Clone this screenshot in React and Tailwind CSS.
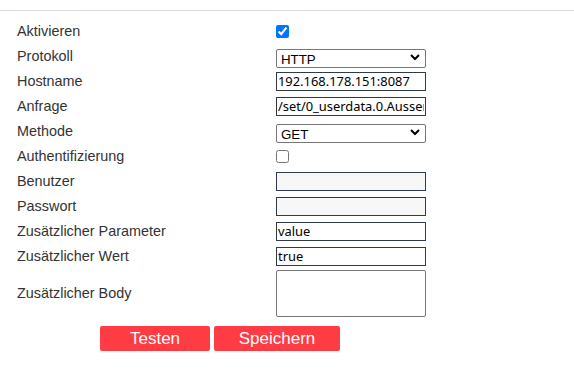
import { useState } from "react";

function Chevron() {
  return (
    <svg
      className="pointer-events-none absolute right-[6px] top-1/2 -translate-y-1/2"
      width="10"
      height="7"
      viewBox="0 0 10 7"
    >
      <path d="M1 1.5 L5 5.5 L9 1.5" fill="none" stroke="#000" strokeWidth="2" />
    </svg>
  );
}

function Select({ value, options }) {
  return (
    <div className="relative w-[150px] h-[19px]">
      <select
        defaultValue={value}
        className="appearance-none w-full h-full border border-[#767676] rounded-[2px] bg-white pl-[4px] text-[13.3px] text-black font-['Liberation_Sans',sans-serif] outline-none"
      >
        {options.map((o) => (
          <option key={o}>{o}</option>
        ))}
      </select>
      <Chevron />
    </div>
  );
}

function TextInput({ value, filled }) {
  return (
    <input
      type="text"
      defaultValue={value}
      className={`w-[150px] h-[19px] border border-[#2f3b48] px-[1px] text-[12.9px] text-black font-['Noto_Sans',sans-serif] outline-none ${
        filled ? "bg-white" : "bg-[#f7f7f7]"
      }`}
    />
  );
}

function Row({ label, children, tall }) {
  return (
    <div className={`grid grid-cols-[259px_1fr] items-center ${tall ? "h-[49px]" : "h-[25px]"}`}>
      <span className="text-[14.4px] text-[#333]">{label}</span>
      <div className="flex items-center">{children}</div>
    </div>
  );
}

export default function App() {
  const [active, setActive] = useState(true);
  const [auth, setAuth] = useState(false);

  return (
    <div className="w-[574px] h-[375px] bg-white font-['Liberation_Sans',Arial,sans-serif]">
      <div className="h-[11px] border-b border-[#dcdcdc]" />
      <div className="pl-[17px] pt-[8px]">
        <Row label="Aktivieren">
          <input
            type="checkbox"
            checked={active}
            onChange={(e) => setActive(e.target.checked)}
            className="w-[13px] h-[13px] m-0 accent-[#0075ff]"
          />
        </Row>
        <Row label="Protokoll">
          <Select value="HTTP" options={["HTTP", "HTTPS"]} />
        </Row>
        <Row label="Hostname">
          <TextInput value="192.168.178.151:8087" filled />
        </Row>
        <Row label="Anfrage">
          <TextInput value="/set/0_userdata.0.Aussen" filled />
        </Row>
        <Row label="Methode">
          <Select value="GET" options={["GET", "POST", "PUT"]} />
        </Row>
        <Row label="Authentifizierung">
          <input
            type="checkbox"
            checked={auth}
            onChange={(e) => setAuth(e.target.checked)}
            className="w-[13px] h-[13px] m-0 accent-[#0075ff]"
          />
        </Row>
        <Row label="Benutzer">
          <TextInput value="" />
        </Row>
        <Row label="Passwort">
          <TextInput value="" />
        </Row>
        <Row label="Zusätzlicher Parameter">
          <TextInput value="value" filled />
        </Row>
        <Row label="Zusätzlicher Wert">
          <TextInput value="true" filled />
        </Row>
        <Row label="Zusätzlicher Body" tall>
          <textarea className="w-[150px] h-[47px] border border-[#767676] rounded-[2px] resize-none outline-none" />
        </Row>
        <div className="flex gap-[4px] pl-[83px] pt-[8px]">
          <button className="w-[110px] h-[25px] bg-[#ff3b44] rounded-[2px] text-white text-[17px]">
            Testen
          </button>
          <button className="w-[126px] h-[25px] bg-[#ff3b44] rounded-[2px] text-white text-[17px]">
            Speichern
          </button>
        </div>
      </div>
    </div>
  );
}
